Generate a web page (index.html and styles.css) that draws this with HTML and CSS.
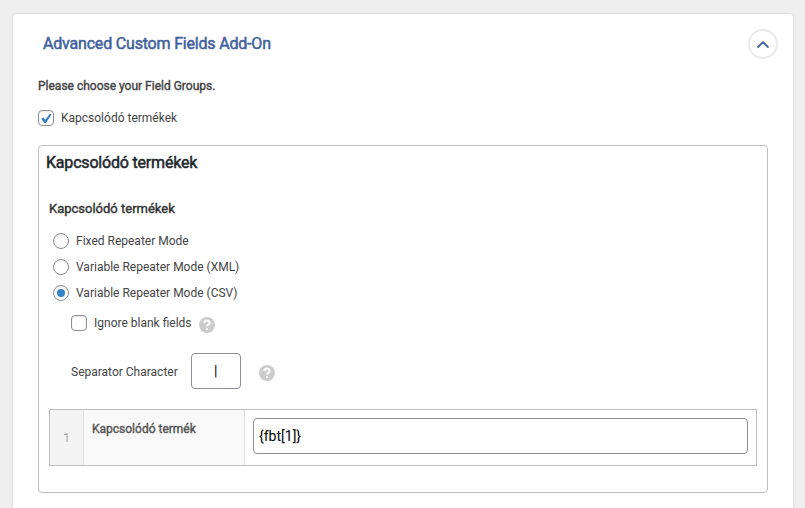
FILE: index.html
```html
<!DOCTYPE html>
<html lang="hu">
<head>
<meta charset="utf-8">
<title>Advanced Custom Fields Add-On</title>
<link rel="stylesheet" href="styles.css">
</head>
<body>
<section class="card">
  <header class="card-header">
    <h1 class="card-title">Advanced Custom Fields Add-On</h1>
    <button class="toggle" aria-label="Toggle"><svg width="12" height="7" viewBox="0 0 12 7"><path d="M1 6 6 1.2 11 6" fill="none" stroke="#40619d" stroke-width="1.8" stroke-linecap="round"/></svg></button>
  </header>
  <p class="prompt">Please choose your Field Groups.</p>
  <label class="option group-option"><span class="box"><svg width="14" height="14" viewBox="0 0 14 14"><path d="M2.2 7.7 4.5 6.5 6.3 8.7 10.7 2.7 12.6 3.3 7 12H5.4Z" fill="#3582c4"/></svg></span>Kapcsolódó termékek</label>
  <div class="panel">
    <h2 class="panel-title">Kapcsolódó termékek</h2>
    <div class="field">
      <h3 class="field-title">Kapcsolódó termékek</h3>
      <label class="option mode"><span class="box radio"></span>Fixed Repeater Mode</label>
      <label class="option mode"><span class="box radio"></span>Variable Repeater Mode (XML)</label>
      <label class="option mode"><span class="box radio checked"></span>Variable Repeater Mode (CSV)</label>
      <div class="ignore"><label class="option"><span class="box"></span>Ignore blank fields</label><span class="help"><svg width="16" height="16" viewBox="0 0 16 16"><path d="M5.4 6C5.4 2.8 10.6 2.8 10.6 5.9 10.6 7.5 8 7.6 8 9.6M8 11.2V13" fill="none" stroke="#fff" stroke-width="2"/></svg></span></div>
      <div class="separator"><label class="sep-label" for="sep">Separator Character</label><input id="sep" class="input sep-input" value="|"><span class="help"><svg width="16" height="16" viewBox="0 0 16 16"><path d="M5.4 6C5.4 2.8 10.6 2.8 10.6 5.9 10.6 7.5 8 7.6 8 9.6M8 11.2V13" fill="none" stroke="#fff" stroke-width="2"/></svg></span></div>
      <div class="repeater">
        <div class="order">1</div>
        <div class="name">Kapcsolódó termék</div>
        <div class="value"><input class="input value-input" value="{fbt[1]}"></div>
      </div>
    </div>
  </div>
</section>
</body>
</html>
```
FILE: styles.css
```css
* { box-sizing: border-box; }
body { margin: 0; height: 508px; overflow: hidden; padding: 13px 11px 0 12px; background: #efefef; color: #444; font: 12px/18px Roboto, sans-serif; }
h1, h2, h3, p { margin: 0; font-weight: 400; }
.card { height: 520px; padding: 0 25px; background: #fff; border: 1px solid #ddd; border-radius: 4px; }
.card-header { display: flex; justify-content: space-between; height: 63px; margin-right: -10px; padding: 15px 0 0 5px; }
.card-title { font-size: 16px; line-height: 29px; letter-spacing: -0.19px; color: #40619d; -webkit-text-stroke: 0.5px #40619d; }
.toggle { display: flex; align-items: center; justify-content: center; width: 30px; height: 30px; padding: 0; background: #fff; border: 2px solid #eaeaea; border-radius: 50%; }
.prompt { color: #444; -webkit-text-stroke: 0.4px #444; }
.option { display: flex; align-items: center; gap: 7px; }
.group-option { height: 16px; margin-top: 15px; }
.box { display: flex; align-items: center; justify-content: center; flex: none; width: 16px; height: 16px; background: #fff; border: 1px solid #8c8f94; border-radius: 4px; box-shadow: inset 0 1px 2px rgba(0, 0, 0, .1); }
.radio { border-radius: 50%; }
.checked::before { content: ""; width: 8px; height: 8px; border-radius: 50%; background: #3582c4; }
.panel { height: 348px; margin-top: 19px; padding: 5px 10px 0; border: 1px solid #bfbfbf; border-radius: 4px; }
.panel-title { margin-left: -3px; font-size: 16px; line-height: 24px; letter-spacing: -0.19px; color: #23282d; -webkit-text-stroke: 0.5px #23282d; }
.field-title { margin-top: 25px; font-size: 13px; line-height: 18px; color: #333; -webkit-text-stroke: 0.4px #333; }
.mode { height: 26px; margin-left: 4px; }
.field-title + .mode { margin-top: 10px; }
.ignore { display: flex; align-items: center; height: 34px; margin-left: 22px; gap: 8px; }
.help { width: 16px; height: 16px; margin-top: 4px; border-radius: 50%; background: #ccc; }
.ignore .help { margin-left: -1px; }
.help svg { display: block; }
.separator { display: flex; align-items: center; height: 36px; margin: 13px 0 20px 22px; }
.sep-label { padding-top: 2px; }
.input { height: 36px; background: #fff; color: #000; border: 1px solid #8c8f94; border-radius: 4px; font: 14px Roboto, sans-serif; outline: 0; }
.sep-input { width: 50px; margin: 0 18px 0 13px; padding: 0; text-align: center; }
.repeater { display: grid; grid-template-columns: 34px 161px 1fr; height: 57px; border: 1px solid #bfbfbf; }
.order { display: flex; align-items: center; justify-content: center; background: #f4f4f4; border-right: 1px solid #dfdfdf; color: #aaa; }
.name { padding: 10px 8px; background: #f9f9f9; border-right: 1px solid #e1e1e1; color: #555; -webkit-text-stroke: 0.4px #555; }
.value { padding: 8px; }
.value-input { display: block; width: 100%; padding: 0 5px; }
```
